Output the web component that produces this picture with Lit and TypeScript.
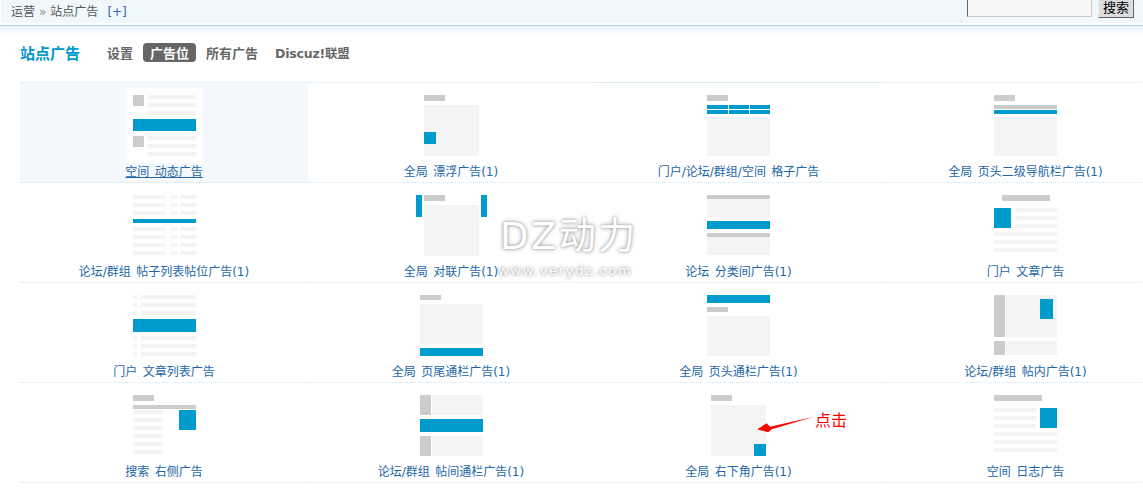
import { LitElement, html, css, svg } from "lit";
import { customElement } from "lit/decorators.js";

type R = [number, number, number, number, string];
const B = "#009bcd", G = "#cccccc", L = "#f4f4f4";

const lines = (x: number, w: number, ys: number[], c = L, h = 4): R[] => ys.map((y) => [x, y, w, h, c] as R);

const items: { label: string; rects: R[]; bg?: boolean }[] = [
  { label: "空间 动态广告", bg: true, rects: [
    [6, 7, 11, 11, G], ...lines(21, 48, [7, 15, 23]), [6, 31, 63, 12, B],
    [6, 48, 11, 11, G], ...lines(21, 48, [48, 56, 64]) ] },
  { label: "全局 漂浮广告(1)", rects: [[10, 7, 21, 6, G], [10, 17, 55, 51, L], [10, 44, 12, 12, B]] },
  { label: "门户/论坛/群组/空间 格子广告", rects: [
    [6, 7, 21, 6, G], [6, 17, 21, 4, B], [28, 17, 20, 4, B], [49, 17, 20, 4, B],
    [6, 22, 21, 4, B], [28, 22, 20, 4, B], [49, 22, 20, 4, B], [6, 29, 63, 39, L] ] },
  { label: "全局 页头二级导航栏广告(1)", rects: [[6, 7, 21, 6, G], [6, 17, 63, 4, G], [6, 22, 63, 4, B], [6, 29, 63, 39, L]] },
  { label: "论坛/群组 帖子列表帖位广告(1)", rects: [
    ...[7, 15, 23, 39, 47, 55, 63].flatMap((y) => [[6, y, 33, 4, L], [43, y, 7, 4, L], [54, y, 15, 4, L]] as R[]),
    [6, 31, 63, 4, B] ] },
  { label: "全局 对联广告(1)", rects: [[2, 7, 6, 22, B], [67, 7, 6, 22, B], [10, 7, 21, 6, G], [10, 17, 55, 51, L]] },
  { label: "论坛 分类间广告(1)", rects: [[6, 7, 63, 4, G], [6, 11, 63, 18, L], [6, 33, 63, 8, B], [6, 45, 63, 4, G], [6, 49, 63, 18, L]] },
  { label: "门户 文章广告", rects: [
    [14, 7, 48, 6, G], [6, 20, 17, 20, B], ...lines(27, 42, [20, 28, 36]), ...lines(6, 63, [44, 52, 60]) ] },
  { label: "门户 文章列表广告", rects: [
    ...lines(6, 4, [7, 15, 23, 48, 56, 64]), ...lines(14, 55, [7, 15, 23, 48, 56, 64]), [6, 31, 63, 13, B] ] },
  { label: "全局 页尾通栏广告(1)", rects: [[6, 7, 21, 5, G], [6, 16, 63, 40, L], [6, 60, 63, 8, B]] },
  { label: "全局 页头通栏广告(1)", rects: [[6, 7, 63, 8, B], [6, 19, 21, 5, G], [6, 28, 63, 40, L]] },
  { label: "论坛/群组 帖内广告(1)", rects: [
    [6, 7, 11, 42, G], [18, 7, 51, 42, L], [52, 11, 13, 20, B], [6, 53, 11, 14, G], [18, 53, 51, 14, L] ] },
  { label: "搜索 右侧广告", rects: [
    [6, 7, 21, 6, G], [6, 17, 63, 4, G], ...lines(6, 30, [22, 30, 38, 46, 54, 62]), [52, 22, 17, 20, B] ] },
  { label: "论坛/群组 帖间通栏广告(1)", rects: [
    [6, 7, 11, 20, G], [18, 7, 51, 20, L], [6, 31, 63, 13, B], [6, 48, 11, 20, G], [18, 48, 51, 20, L] ] },
  { label: "全局 右下角广告(1)", rects: [[10, 7, 21, 6, G], [10, 17, 55, 51, L], [53, 56, 12, 12, B]] },
  { label: "空间 日志广告", rects: [
    [6, 7, 48, 6, G], ...lines(6, 42, [20, 28, 36]), [52, 20, 17, 20, B], ...lines(6, 63, [44, 52, 60]) ] },
];

@customElement("app-root")
export class AppRoot extends LitElement {
  static styles = css`
    :host {
      display: block;
      position: relative;
      width: 1143px;
      height: 489px;
      overflow: hidden;
      background: #fff;
      font-family: "DejaVu Sans", "Noto Sans CJK SC", sans-serif;
      font-size: 12px;
      color: #666;
    }
    .bar {
      display: flex;
      justify-content: space-between;
      align-items: flex-end;
      height: 23px;
      margin-left: 1px;
      padding: 0 9px 6px 10px;
      box-sizing: border-box;
      background: #f0f8fc;
    }
    .crumb { display: flex; gap: 4px; line-height: 17px; margin-bottom: -4px; color: #555; }
    .sep { color: #8a8f96; }
    .plus { color: #3a66b5; margin-left: 5px; }
    .search { display: flex; gap: 6px; align-items: flex-end; }
    .input {
      width: 125px;
      height: 20px;
      box-sizing: border-box;
      background: #f8f8f8;
      border: 1px solid;
      border-color: #666 #ccc #ccc #666;
    }
    .btn {
      width: 36px;
      height: 20px;
      margin-bottom: -1px;
      box-sizing: border-box;
      background: #dddddd;
      border: 1px solid;
      border-color: #eee #666 #666 #eee;
      color: #000;
      text-align: center;
      line-height: 18px;
      font-size: 13px;
    }
    .rule {
      margin-top: 2px;
      height: 9px;
      border-top: 1px solid #b9d0df;
      background: linear-gradient(#e6f1f8, #fff);
    }
    .head {
      display: flex;
      align-items: center;
      height: 19px;
      margin: 8px 0 20px 20px;
    }
    .title { width: 87px; font-size: 15px; font-weight: 700; color: #0099cc; }
    .tab { font-size: 13px; font-weight: 700; color: #666; line-height: 17px; padding-top: 2px; }
    .tab.a { margin-right: 4px; }
    .tab.on {
      background: #666;
      color: #fff;
      border-radius: 4px;
      padding: 2px 7px 0;
      margin: 0 10px 0 6px;
    }
    .tab.d { margin-left: 17px; font-size: 12.5px; letter-spacing: -0.2px; }
    .grid {
      display: grid;
      grid-template-columns: 288px 286px 289px 285px;
      margin-left: 20px;
      width: 1148px;
    }
    .cell {
      display: flex;
      flex-direction: column;
      align-items: center;
      height: 100px;
      box-sizing: border-box;
      padding-top: 5px;
      border-bottom: 1px dotted #cfe6f4;
    }
    .top { height: 101px; border-top: 1px dotted #cfe6f4; }
    .solid { border-top: 1px solid #dcedf7; }
    .hover { background: #f5f8fc; }
    .icon { display: block; width: 75px; height: 75px; flex: none; }
    .iconbg { background: #fff; }
    .label {
      color: #2366a8;
      text-decoration: none;
      line-height: 18px;
      white-space: nowrap;
      word-spacing: 1.5px;
    }
    .hover .label { text-decoration: underline; }
    .mark {
      position: absolute;
      left: 500px;
      top: 214px;
      color: #fff;
      text-shadow: 0 0 3px #999, 0 0 5px #bbb;
      pointer-events: none;
      width: 140px;
    }
    .mark .big { font-size: 37px; line-height: 46px; letter-spacing: 2.5px; white-space: nowrap; }
    .mark .small { font-size: 13px; line-height: 18px; letter-spacing: 1.7px; white-space: nowrap; margin: 2px 0 0 -2px; }
    .arrow { position: absolute; left: 750px; top: 410px; width: 70px; height: 30px; }
    .note {
      position: absolute;
      left: 815px;
      top: 410px;
      color: #f00;
      font-size: 16px;
      line-height: 22px;
    }
  `;

  private icon(rects: R[], bg?: boolean) {
    return html`<svg class="icon ${bg ? "iconbg" : ""}" viewBox="0 0 75 75" shape-rendering="crispEdges">
      ${rects.map(([x, y, w, h, c]) => svg`<rect x=${x} y=${y} width=${w} height=${h} fill=${c}></rect>`)}
    </svg>`;
  }

  render() {
    return html`
      <div class="bar">
        <div class="crumb"><span>运营</span><span class="sep">»</span><span>站点广告</span><span class="plus">[+]</span></div>
        <div class="search"><div class="input"></div><div class="btn">搜索</div></div>
      </div>
      <div class="rule"></div>
      <div class="head">
        <div class="title">站点广告</div>
        <span class="tab a">设置</span>
        <span class="tab on">广告位</span>
        <span class="tab">所有广告</span>
        <span class="tab d">Discuz!联盟</span>
      </div>
      <div class="grid">
        ${items.map((it, i) => html`
          <div class="cell ${i < 4 ? "top" : ""} ${i === 2 ? "solid" : ""} ${i === 0 ? "hover" : ""}">
            ${this.icon(it.rects, it.bg)}
            <a class="label">${it.label}</a>
          </div>`)}
      </div>
      <div class="mark">
        <div class="big">DZ动力</div>
        <div class="small">www.verydz.com</div>
      </div>
      <svg class="arrow" viewBox="0 0 70 30">
        <polygon points="7.3,19.3 16.7,13.3 20,16.7 64,6.7 21.7,19.3 18.3,22.3" fill="#f00"></polygon>
      </svg>
      <div class="note">点击</div>
    `;
  }
}
